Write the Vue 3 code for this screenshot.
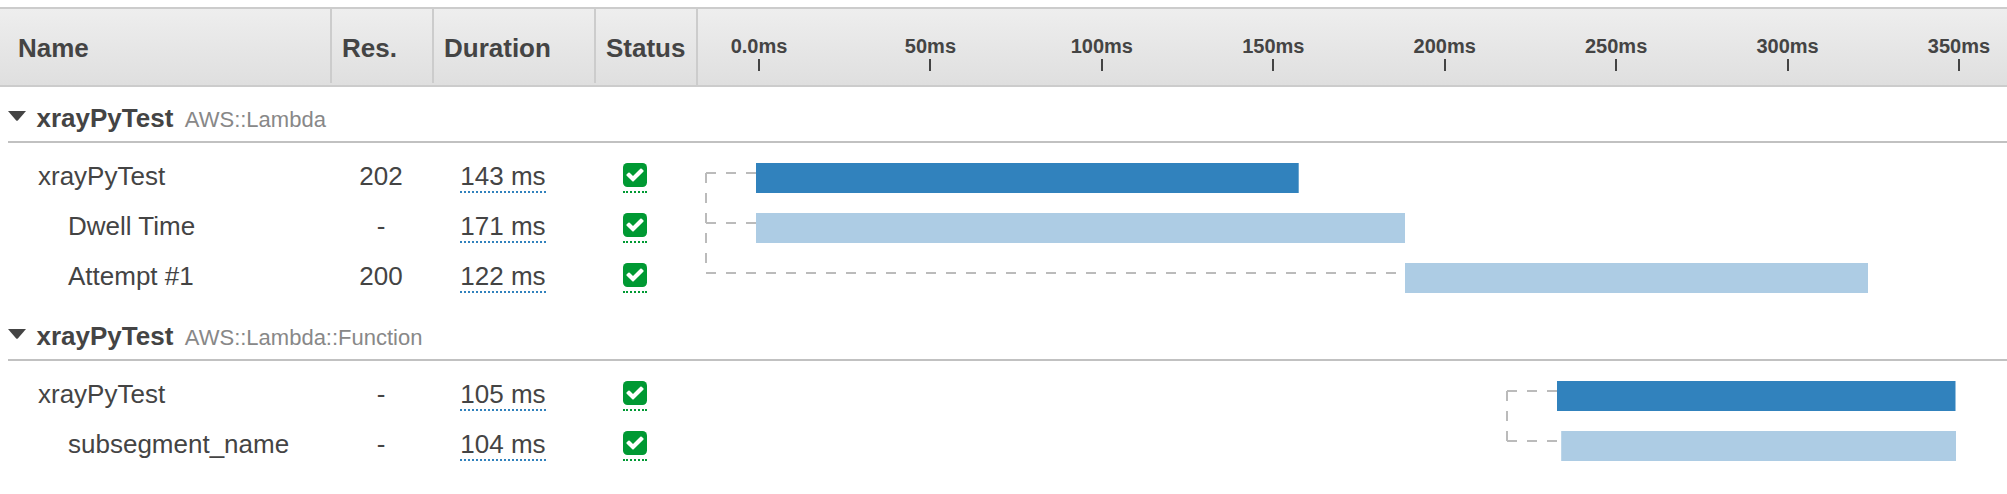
<script setup>
const ticks = ['0.0ms', '50ms', '100ms', '150ms', '200ms', '250ms', '300ms', '350ms']

// Bar coordinates are in timeline pixels, measured from the left edge of the chart column.
const groups = [
  {
    name: 'xrayPyTest',
    type: 'AWS::Lambda',
    trunk: 10,
    rows: [
      { name: 'xrayPyTest', res: '202', duration: '143 ms', start: 60, end: 602.7 },
      { name: 'Dwell Time', res: '-', duration: '171 ms', start: 60, end: 709, child: true },
      { name: 'Attempt #1', res: '200', duration: '122 ms', start: 709, end: 1172, child: true },
    ],
  },
  {
    name: 'xrayPyTest',
    type: 'AWS::Lambda::Function',
    trunk: 811,
    rows: [
      { name: 'xrayPyTest', res: '-', duration: '105 ms', start: 861, end: 1259.5 },
      { name: 'subsegment_name', res: '-', duration: '104 ms', start: 865.2, end: 1260, child: true },
    ],
  },
]
</script>

<template>
  <div class="trace">
    <header class="head">
      <div class="cell name">Name</div>
      <div class="cell res">Res.</div>
      <div class="cell dur">Duration</div>
      <div class="cell status">Status</div>
      <div class="axis">
        <div v-for="t in ticks" :key="t" class="tick"><span>{{ t }}</span><i></i></div>
      </div>
    </header>

    <section v-for="g in groups" :key="g.type" class="group">
      <div class="title">
        <svg class="caret" width="18" height="10" viewBox="0 0 18 10"><path d="M0 0H18L9.8 9.4Q9 10.3 8.2 9.4Z" /></svg>
        <b>{{ g.name }}</b>
        <span class="type">{{ g.type }}</span>
      </div>
      <div class="body">
        <div class="rows">
          <div v-for="r in g.rows" :key="r.name" class="row">
            <div class="r-name" :class="{ child: r.child }">{{ r.name }}</div>
            <div class="r-res">{{ r.res }}</div>
            <div class="r-dur"><span>{{ r.duration }}</span></div>
            <div class="r-status">
              <span>
                <svg width="24" height="24" viewBox="0 128 1536 1536">
                  <rect y="128" width="1536" height="1536" rx="288" fill="#009933" />
                  <path fill="#fff" d="M685 1299l614 -614q19 -19 19 -45t-19 -45l-102 -102q-19 -19 -45 -19t-45 19l-467 467l-211 -211q-19 -19 -45 -19t-45 19l-102 102q-19 19 -19 45t19 45l358 358q19 19 45 19t45 -19z" />
                </svg>
              </span>
            </div>
          </div>
        </div>
        <svg class="chart" width="1311" :height="g.rows.length * 50">
          <g class="wire">
            <line :x1="g.trunk" y1="20" :x2="g.trunk" :y2="g.rows.length * 50 - 30" />
            <line v-for="(r, i) in g.rows" :key="i" :x1="g.trunk" :x2="r.start" :y1="20 + i * 50" :y2="20 + i * 50" />
          </g>
          <rect
            v-for="(r, i) in g.rows" :key="r.name"
            :x="r.start" :y="10 + i * 50" :width="r.end - r.start" height="30"
            :class="r.child ? 'bar-sub' : 'bar'"
          />
        </svg>
      </div>
    </section>
  </div>
</template>

<style>
html, body { background: #fff; overflow: hidden; }
</style>

<style scoped>
.trace {
  box-sizing: border-box;
  width: 2007px;
  height: 494px;
  padding-top: 7px;
  background: #fff;
  color: #444;
  font: 26px/30px "Liberation Sans", Arial, sans-serif;
  overflow: hidden;
}
.head {
  box-sizing: border-box;
  display: flex;
  align-items: flex-start;
  height: 80px;
  border-top: 2px solid #ccc;
  border-bottom: 2px solid #ccc;
  background: linear-gradient(#eee, #dfdfdf);
  font-weight: bold;
}
.cell {
  box-sizing: border-box;
  flex: none;
  height: 74px;
  padding: 24px 0 0 10px;
  border-right: 2px solid #ccc;
}
.name { width: 332px; padding-left: 18px; }
.res { width: 102px; }
.dur { width: 162px; }
.status { width: 102px; height: 76px; }
.axis {
  display: flex;
  flex: none;
  margin-left: -24.7px;
  padding-top: 25px;
}
.tick {
  display: flex;
  flex: none;
  flex-direction: column;
  align-items: center;
  width: 171.43px;
  font-size: 20px;
  line-height: 24px;
}
.tick i { width: 2px; height: 12px; margin-top: 1px; background: #444; }
.group + .group { margin-top: 2px; }
.title {
  box-sizing: border-box;
  display: flex;
  align-items: baseline;
  height: 56px;
  margin-left: 8px;
  padding-top: 16px;
  border-bottom: 2px solid #c1c1c1;
}
.caret {
  width: 18px;
  height: 10px;
  margin-right: 10.5px;
  align-self: flex-start;
  margin-top: 8px;
  fill: #444;
}
.type { margin-left: 11.5px; font-size: 22px; color: #888; }
.body { display: flex; padding-top: 10px; }
.rows { flex: none; width: 696px; }
.row { display: flex; height: 50px; padding-top: 8px; box-sizing: border-box; }
.r-name { box-sizing: border-box; width: 330px; padding-left: 38px; }
.r-name.child { padding-left: 68px; }
.r-res { width: 102px; text-align: center; }
.r-dur { width: 142px; text-align: center; }
.r-dur span {
  display: inline-block;
  width: 86px;
  height: 30px;
  border-bottom: 2px dotted #3182bd;
}
.r-status { padding: 2px 0 0 49px; }
.r-status span { display: block; width: 24px; height: 28px; box-sizing: content-box; border-bottom: 2px dotted #009933; }
.r-status svg { display: block; }
.chart { display: block; flex: none; }
.wire line { stroke: #bbb; stroke-width: 2; stroke-dasharray: 10 10; }
.bar { fill: #3182bd; }
.bar-sub { fill: #adcce4; }
</style>
